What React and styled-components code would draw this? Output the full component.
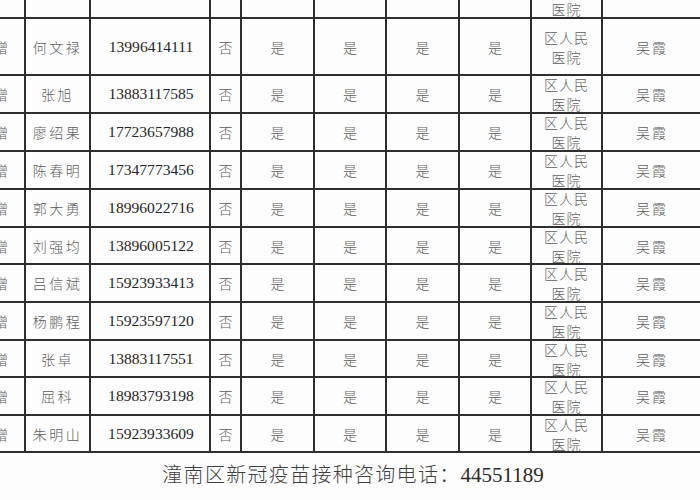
import React from "react";
import styled, { createGlobalStyle } from "styled-components";

const Global = createGlobalStyle`
  html, body { margin: 0; padding: 0; background: #fff; }
  body { width: 700px; height: 500px; overflow: hidden; }
  #root { width: 700px; height: 500px; overflow: hidden; }
`;

const COLS = "56px 65px 120px 31px 73px 72px 73px 72px 71px 100px";
const LINE = "#2e2e2e";

const Page = styled.div`
  width: 700px;
  height: 500px;
  overflow: hidden;
  background: #fdfdfd;
  font-family: "Liberation Serif", "Noto Sans CJK SC", serif;
`;

const Table = styled.div`
  display: flex;
  flex-direction: column;
  margin-top: -19px;
  margin-left: -30px;
  width: 733px;
`;

const Row = styled.div`
  display: grid;
  grid-template-columns: ${COLS};
  height: ${(p) => p.$h}px;
`;

const Cell = styled.div`
  box-sizing: border-box;
  border-right: 2px solid ${LINE};
  border-bottom: 2px solid ${LINE};
  display: flex;
  align-items: center;
  justify-content: ${(p) => (p.$variant === "lead" ? "flex-end" : "center")};
  padding-right: ${(p) => (p.$variant === "lead" ? "16px" : "0")};
  padding-left: ${(p) => (p.$variant === "phone" ? "2px" : "0")};
  text-align: center;
  overflow: hidden;
  white-space: pre-line;
  font-family: ${(p) =>
    p.$variant === "phone"
      ? '"Liberation Serif", serif'
      : '"Noto Sans CJK SC", "Noto Sans CJK JP", sans-serif'};
  font-size: ${(p) => (p.$variant === "phone" ? "15.6px" : p.$variant === "name" ? "14px" : "14px")};
  font-weight: ${(p) => (p.$variant === "phone" ? 400 : 300)};
  letter-spacing: ${(p) =>
    p.$variant === "name" ? "2.5px" : p.$variant === "sign" ? "2px" : p.$variant === "org" ? "1px" : "0"};
  line-height: ${(p) => (p.$variant === "org" ? "20px" : "18px")};
  color: ${(p) => (p.$variant === "phone" ? "#262626" : "#5e5e5e")};
`;

const Footer = styled.div`
  padding-top: 10px;
  padding-left: 6px;
  text-align: center;
  font-family: "Noto Sans CJK SC", "Noto Sans CJK JP", sans-serif;
  font-weight: 300;
  font-size: 20px;
  letter-spacing: 1.3px;
  line-height: 22px;
  color: #3e3e3e;
`;

const Num = styled.span`
  font-family: "Liberation Serif", serif;
  font-weight: 400;
  font-size: 21px;
  letter-spacing: 0;
  color: #2a2a2a;
`;

const people = [
  ["何文禄", "13996414111"],
  ["张旭", "13883117585"],
  ["廖绍果", "17723657988"],
  ["陈春明", "17347773456"],
  ["郭大勇", "18996022716"],
  ["刘强均", "13896005122"],
  ["吕信斌", "15923933413"],
  ["杨鹏程", "15923597120"],
  ["张卓", "13883117551"],
  ["屈科", "18983793198"],
  ["朱明山", "15923933609"],
];

const heights = [57, 38, 38, 38, 38, 37, 38, 38, 37, 38, 37];

function DataRow({ name, phone, h }) {
  return (
    <Row $h={h}>
      <Cell $variant="lead">增</Cell>
      <Cell $variant="name">{name}</Cell>
      <Cell $variant="phone">{phone}</Cell>
      <Cell $variant="mark">否</Cell>
      <Cell $variant="mark">是</Cell>
      <Cell $variant="mark">是</Cell>
      <Cell $variant="mark">是</Cell>
      <Cell $variant="mark">是</Cell>
      <Cell $variant="org">{"区人民\n医院"}</Cell>
      <Cell $variant="sign">吴霞</Cell>
    </Row>
  );
}

export default function App() {
  return (
    <Page>
      <Global />
      <Table>
        <Row $h={38}>
          <Cell $variant="lead" />
          <Cell />
          <Cell />
          <Cell />
          <Cell />
          <Cell />
          <Cell />
          <Cell />
          <Cell $variant="org">{"区人民\n医院"}</Cell>
          <Cell />
        </Row>
        {people.map(([n, p], i) => (
          <DataRow key={p} name={n} phone={p} h={heights[i]} />
        ))}
      </Table>
      <Footer>
        潼南区新冠疫苗接种咨询电话：<Num>44551189</Num>
      </Footer>
    </Page>
  );
}
